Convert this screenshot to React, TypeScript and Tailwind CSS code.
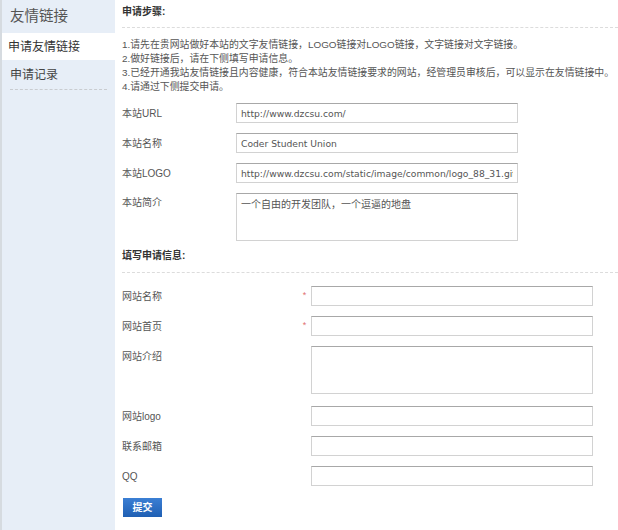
import React from "react";

const cjk = "font-['Liberation_Sans','Noto_Sans_CJK_SC',sans-serif]";

const steps = [
  "1.请先在贵网站做好本站的文字友情链接，LOGO链接对LOGO链接，文字链接对文字链接。",
  "2.做好链接后，请在下侧填写申请信息。",
  "3.已经开通我站友情链接且内容健康，符合本站友情链接要求的网站，经管理员审核后，可以显示在友情链接中。",
  "4.请通过下侧提交申请。",
];

const inputCls =
  "h-[20px] border border-[#d2d2d2] border-t-[#a8a8a8] bg-white px-[4px] text-[9.2px] text-[#555] font-['DejaVu_Sans',sans-serif] outline-none";

function SiteRow({ label, value }: { label: string; value: string }) {
  return (
    <div className="flex h-[30px] items-center">
      <span className="w-[114px] text-[10px] text-[#555]">{label}</span>
      <input className={`${inputCls} w-[282px]`} defaultValue={value} readOnly />
    </div>
  );
}

function ApplyRow({ label, required }: { label: string; required?: boolean }) {
  return (
    <div className="flex h-[30px] items-center">
      <span className="w-[176px] text-[10px] text-[#555]">{label}</span>
      <span className="w-[13px] text-center text-[9px] text-[#e07070]">{required ? "*" : ""}</span>
      <input className={`${inputCls} w-[282px]`} />
    </div>
  );
}

export default function App() {
  return (
    <div className={`flex h-[530px] w-[618px] bg-white ${cjk}`}>
      {/* 左侧菜单 */}
      <aside className="w-[115px] shrink-0 border-l-2 border-[#d6dbe0] bg-[#e7eef7]">
        <div className="flex h-[33px] items-center pl-[8px] text-[14.5px] text-[#555]">友情链接</div>
        <div className="flex h-[27px] items-center bg-white pl-[6px] text-[12px] text-[#333]">申请友情链接</div>
        <div className="mx-[8px] flex h-[30px] items-center border-b border-dashed border-[#c9ccd0] text-[12px] text-[#444]">
          申请记录
        </div>
      </aside>

      {/* 内容 */}
      <main className="min-w-0 flex-1 pl-[7px]">
        <div className="h-[28px] border-b border-dashed border-[#dcdcdc] pt-[5px] text-[10px] font-bold leading-[14px] text-[#333]">
          申请步骤:
        </div>
        <div className="mt-[10px] text-[9.9px] leading-[14px] text-[#555]">
          {steps.map((s) => (
            <div key={s} className="whitespace-nowrap">{s}</div>
          ))}
        </div>

        <div className="mt-[4px]">
          <SiteRow label="本站URL" value="http://www.dzcsu.com/" />
          <SiteRow label="本站名称" value="Coder Student Union" />
          <SiteRow label="本站LOGO" value="http://www.dzcsu.com/static/image/common/logo_88_31.gif" />
          <div className="flex pt-[5px]">
            <span className="mt-[3px] w-[114px] text-[10px] leading-[14px] text-[#555]">本站简介</span>
            <textarea
              className={`${inputCls} h-[48px] w-[282px] resize-none pt-[3px] text-[10px] ${cjk}`}
              defaultValue="一个自由的开发团队，一个逗逼的地盘"
              readOnly
            />
          </div>
        </div>

        <div className="mt-[8px] h-[24px] border-b border-dashed border-[#dcdcdc] text-[10px] font-bold leading-[14px] text-[#333]">
          填写申请信息:
        </div>

        <div className="mt-[8px]">
          <ApplyRow label="网站名称" required />
          <ApplyRow label="网站首页" required />
          <div className="flex pb-[7px] pt-[5px]">
            <span className="mt-[4px] w-[189px] text-[10px] leading-[14px] text-[#555]">网站介绍</span>
            <textarea className={`${inputCls} h-[48px] w-[282px] resize-none`} />
          </div>
          <ApplyRow label="网站logo" />
          <ApplyRow label="联系邮箱" />
          <ApplyRow label="QQ" />
        </div>

        <button
          type="button"
          className="ml-[1px] mt-[7px] h-[19px] w-[39px] bg-gradient-to-b from-[#3b7fd4] to-[#1f5fb3] text-[10px] font-bold text-white"
        >
          提交
        </button>
      </main>
    </div>
  );
}
